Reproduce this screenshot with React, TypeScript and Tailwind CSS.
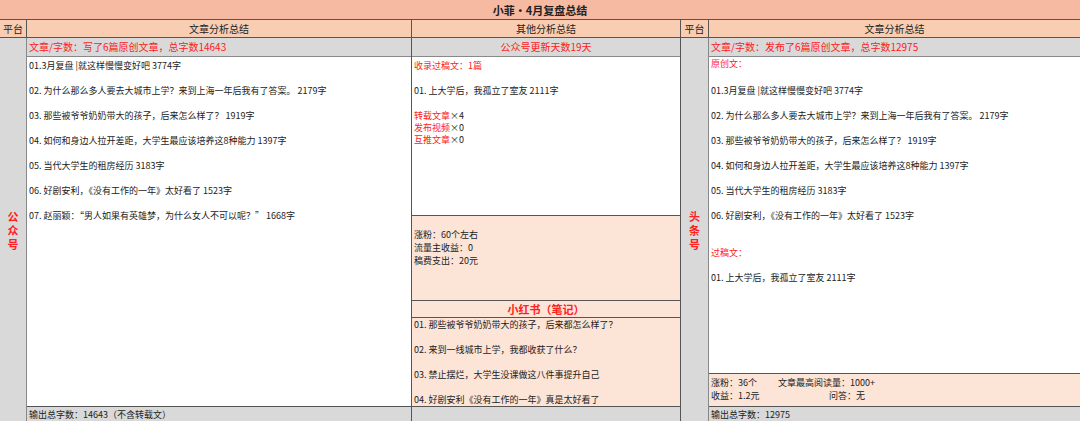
const font = { fontFamily: '"Noto Sans CJK SC", "Liberation Sans", sans-serif' };

const leftItems = [
  '01.3月复盘 |就这样慢慢变好吧 3774字',
  '02. 为什么那么多人要去大城市上学？来到上海一年后我有了答案。 2179字',
  '03. 那些被爷爷奶奶带大的孩子，后来怎么样了？ 1919字',
  '04. 如何和身边人拉开差距，大学生最应该培养这8种能力 1397字',
  '05. 当代大学生的租房经历 3183字',
  '06. 好剧安利，《没有工作的一年》太好看了 1523字',
  '07. 赵丽颖：“男人如果有英雄梦，为什么女人不可以呢？” 1668字',
];

const rightItems = [
  '01.3月复盘 |就这样慢慢变好吧 3774字',
  '02. 为什么那么多人要去大城市上学？来到上海一年后我有了答案。 2179字',
  '03. 那些被爷爷奶奶带大的孩子，后来怎么样了？ 1919字',
  '04. 如何和身边人拉开差距，大学生最应该培养这8种能力 1397字',
  '05. 当代大学生的租房经历 3183字',
  '06. 好剧安利，《没有工作的一年》太好看了 1523字',
];

const xhs = [
  '01. 那些被爷爷奶奶带大的孩子，后来都怎么样了？',
  '02. 来到一线城市上学，我都收获了什么？',
  '03. 禁止摆烂，大学生没课做这八件事提升自己',
  '04. 好剧安利《没有工作的一年》真是太好看了',
];

function Vertical({ text }: { text: string }) {
  return (
    <div className="flex flex-col items-center text-[11px] font-bold leading-[14px] text-[#ff2020]">
      {text.split('').map((c, i) => (
        <span key={i}>{c}</span>
      ))}
    </div>
  );
}

export default function App() {
  return (
    <div style={font} className="w-[1080px] h-[421px] overflow-hidden bg-white text-[9px] text-[#222] leading-[12px]">
      <div className="h-[20px] bg-[#f6b9a1] flex items-center justify-center text-[11px] font-bold border-b border-[#555]">
        小菲•4月复盘总结
      </div>
      <div className="grid grid-cols-[27px_385px_269px_28px_371px] h-[18px] bg-[#f9cdb2] text-[10px] border-b border-[#555]">
        <div className="flex items-center justify-center border-r border-[#555]">平台</div>
        <div className="flex items-center justify-center border-r border-[#555]">文章分析总结</div>
        <div className="flex items-center justify-center border-r border-[#555]">其他分析总结</div>
        <div className="flex items-center justify-center border-r border-[#555]">平台</div>
        <div className="flex items-center justify-center">文章分析总结</div>
      </div>
      <div className="grid grid-cols-[27px_385px_269px_28px_371px] h-[367px]">
        <div className="bg-[#d9d9d9] flex items-center justify-center border-r border-[#888]">
          <Vertical text="公众号" />
        </div>
        <div className="flex flex-col border-r border-[#555]">
          <div className="h-[19px] bg-[#d9d9d9] flex items-center px-[2px] text-[10px] text-[#ff2020] border-b border-[#888]">
            文章/字数：写了6篇原创文章，总字数14643
          </div>
          <div className="flex-1 flex flex-col gap-[13px] px-[2px] pt-[3px]">
            {leftItems.map((t) => (
              <div key={t}>{t}</div>
            ))}
          </div>
          <div className="h-[16px] bg-[#d9d9d9] border-t border-[#555] flex items-center px-[2px]">
            输出总字数：14643（不含转载文）
          </div>
        </div>
        <div className="flex flex-col border-r border-[#555]">
          <div className="h-[19px] bg-[#d9d9d9] flex items-center justify-center text-[10px] text-[#ff2020] border-b border-[#888]">
            公众号更新天数19天
          </div>
          <div className="h-[158px] flex flex-col px-[2px] pt-[3px]">
            <div className="text-[#ff2020]">收录过稿文：1篇</div>
            <div className="mt-[13px]">01. 上大学后，我孤立了室友 2111字</div>
            <div className="mt-[13px]"><span className="text-[#ff2020]">转载文章</span>×4</div>
            <div><span className="text-[#ff2020]">发布视频</span>×0</div>
            <div><span className="text-[#ff2020]">互推文章</span>×0</div>
          </div>
          <div className="h-[85px] bg-[#fce4d6] border-t border-[#555] px-[2px] pt-[12px] leading-[13px]">
            <div>涨粉：60个左右</div>
            <div>流量主收益：0</div>
            <div>稿费支出：20元</div>
          </div>
          <div className="h-[18px] bg-[#fce4d6] border-t border-b border-[#555] flex items-center justify-center text-[11px] font-bold text-[#ff2020]">
            小红书（笔记）
          </div>
          <div className="flex-1 bg-[#fce4d6] px-[2px] flex flex-col gap-[13px] pt-[1px]">
            {xhs.map((t) => (
              <div key={t}>{t}</div>
            ))}
          </div>
          <div className="h-[16px] bg-[#d9d9d9] border-t border-[#555]" />
        </div>
        <div className="bg-[#d9d9d9] flex items-center justify-center border-r border-[#888]">
          <Vertical text="头条号" />
        </div>
        <div className="flex flex-col">
          <div className="h-[19px] bg-[#d9d9d9] flex items-center px-[2px] text-[10px] text-[#ff2020] border-b border-[#888]">
            文章/字数：发布了6篇原创文章，总字数12975
          </div>
          <div className="flex-1 flex flex-col px-[2px] pt-[1px]">
            <div className="text-[#ff2020]">原创文：</div>
            <div className="flex flex-col gap-[13px] mt-[15px]">
              {rightItems.map((t) => (
                <div key={t}>{t}</div>
              ))}
            </div>
            <div className="text-[#ff2020] mt-[25px]">过稿文：</div>
            <div className="mt-[13px]">01. 上大学后，我孤立了室友 2111字</div>
          </div>
          <div className="h-[33px] bg-[#fce4d6] border-t border-[#555] px-[2px] pt-[2px] leading-[13px]">
            <div className="flex"><span className="w-[67px]">涨粉：36个</span><span>文章最高阅读量：1000+</span></div>
            <div className="flex"><span className="w-[118px]">收益：1.2元</span><span>问答：无</span></div>
          </div>
          <div className="h-[16px] bg-[#d9d9d9] border-t border-[#555] flex items-center px-[2px]">
            输出总字数：12975
          </div>
        </div>
      </div>
    </div>
  );
}
